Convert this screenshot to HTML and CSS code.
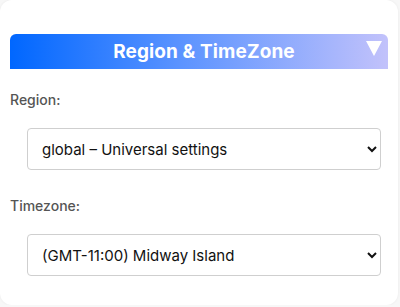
FILE: index.html
```html
<!DOCTYPE html>
<html>
<head>
<meta charset="utf-8">
<link rel="stylesheet" href="styles.css">
</head>
<body>
<div class="card">
  <div class="header">
    <span class="title">Region &amp; TimeZone</span>
    <svg class="arrow" width="16" height="16" viewBox="0 0 16 16"><polygon points="0,1 16,1 8,16" fill="#fff"/></svg>
  </div>
  <div class="field">
    <label class="label">Region:</label>
    <select class="select">
      <option>global – Universal settings</option>
    </select>
  </div>
  <div class="field">
    <label class="label">Timezone:</label>
    <select class="select">
      <option>(GMT-11:00) Midway Island</option>
    </select>
  </div>
</div>
</body>
</html>
```
FILE: styles.css
```css
html, body {
  margin: 0;
  padding: 0;
  background: #f7f7f7;
  font-family: Inter, "Liberation Sans", sans-serif;
}
.card {
  box-sizing: border-box;
  width: 398px;
  height: 305px;
  background: #fff;
  border-radius: 12px;
  box-shadow: 0 0 3px rgba(0,0,0,0.06);
  padding: 34px 10px 0 10px;
}
.header {
  position: relative;
  height: 35px;
  border-radius: 6px 6px 0 0;
  background: linear-gradient(90deg, #0067ff 0%, #5b93ff 45%, #c2c2fb 100%);
  display: flex;
  align-items: center;
  justify-content: center;
  padding-left: 10px;
}
.title {
  color: #fff;
  font-weight: 700;
  font-size: 19px;
  letter-spacing: 0.1px;
}
.arrow {
  position: absolute;
  right: 6px;
  top: 6px;
}
.field {
  display: flex;
  flex-direction: column;
}
.label {
  margin-top: 22px;
  font-size: 14px;
  font-weight: 500;
  color: #555;
}
.select {
  margin: 20px 7px 5px 17px;
  height: 42px;
  border: 1px solid #cfcfcf;
  border-radius: 4px;
  background: #fff;
  padding: 0 10px;
  font-family: Inter, "Liberation Sans", sans-serif;
  font-size: 15px;
  color: #111;
}
```
